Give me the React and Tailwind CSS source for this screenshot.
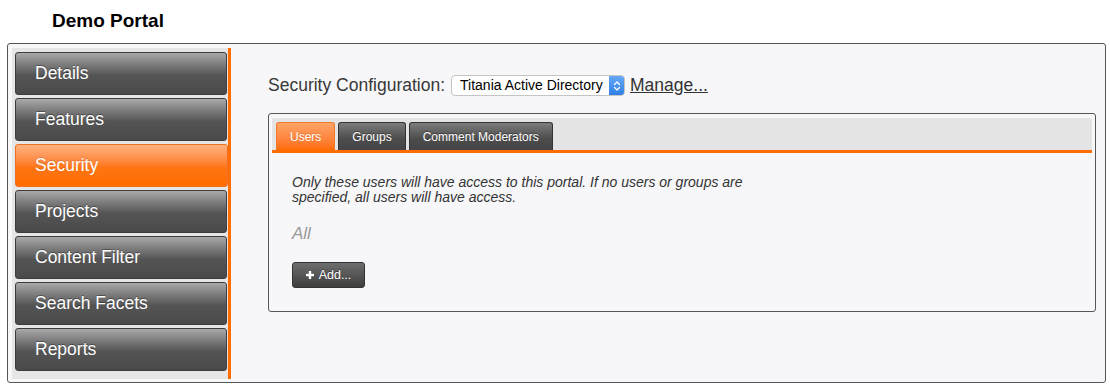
import React, { useState } from 'react';

const sections = ['Details', 'Features', 'Security', 'Projects', 'Content Filter', 'Search Facets', 'Reports'];
const tabs = ['Users', 'Groups', 'Comment Moderators'];

const SideItem = ({ label, active, onClick }) => (
    <div
        onClick={onClick}
        className={
            active
                ? 'h-[43px] mr-[-1px] flex items-center pl-[19px] rounded-[3px] border border-[#f07020] bg-linear-to-b from-[#ffb27e] via-[#ff7512] via-55% to-[#ff6c00] text-white text-[17.5px] cursor-pointer [text-shadow:0_-1px_0_rgba(0,0,0,0.15)]'
                : 'h-[43px] flex items-center pl-[19px] rounded-[3px] border border-[#3c3c3c] bg-linear-to-b from-[#a9a9a9] via-[#545454] via-55% to-[#4a4a4a] text-white text-[17.5px] cursor-pointer [text-shadow:0_-1px_0_rgba(0,0,0,0.35)]'
        }
    >
        {label}
    </div>
);

const Tab = ({ label, active, onClick }) => (
    <div
        onClick={onClick}
        className={
            active
                ? 'h-[28px] flex items-center px-[13px] rounded-t-[3px] border border-b-0 border-[#f07a2a] bg-linear-to-b from-[#ffa467] to-[#ff6c00] text-white text-[12px] cursor-pointer [text-shadow:0_-1px_0_rgba(0,0,0,0.15)]'
                : 'h-[28px] flex items-center px-[13px] rounded-t-[3px] border border-b-0 border-[#333] bg-linear-to-b from-[#7c7c7c] via-[#4c4c4c] via-60% to-[#444] text-white text-[12px] cursor-pointer [text-shadow:0_-1px_0_rgba(0,0,0,0.4)]'
        }
    >
        {label}
    </div>
);

export default function App() {
    const [section, setSection] = useState('Security');
    const [tab, setTab] = useState('Users');

    return (
        <div className="w-[1110px] h-[391px] bg-white font-['Liberation_Sans',Arial,sans-serif] text-[#333]">
            <div className="h-[43px] pt-[10px] pl-[52px]">
                <h1 className="text-[19px] leading-[22px] font-bold text-black">Demo Portal</h1>
            </div>

            <div className="ml-[7px] w-[1099px] h-[340px] border border-[#555] rounded-[3px] bg-[#f7f7f9] flex pl-[4px] pt-[4px] pb-[3px]">
                {/* left nav */}
                <div className="w-[219px] h-[331px] bg-[#e6e6e6] border-r-[3px] border-[#ff6c00] pl-[3px] pr-[1px] pt-[4px] flex flex-col gap-[3px]">
                    {sections.map((s) => (
                        <SideItem key={s} label={s} active={s === section} onClick={() => setSection(s)} />
                    ))}
                </div>

                {/* main content */}
                <div className="flex-1 pl-[37px] pr-[9px] pt-[27px]">
                    <div className="flex items-center h-[21px] text-[17.5px] text-[#383838]">
                        <span>Security Configuration:</span>
                        <div className="ml-[6px] w-[174px] h-[21px] flex items-center justify-between bg-white border border-[#c4c4c4] rounded-[4px] overflow-hidden">
                            <span className="pl-[8px] text-[14px] text-black whitespace-nowrap">Titania Active Directory</span>
                            <span className="w-[15px] h-full flex items-center justify-center bg-linear-to-b from-[#64a9f7] to-[#2f7ee6]">
                                <svg width="8" height="12" viewBox="0 0 8 12" fill="none" stroke="white" strokeWidth="1.3" strokeLinecap="round" strokeLinejoin="round">
                                    <path d="M1.5 4.5 L4 2 L6.5 4.5" />
                                    <path d="M1.5 7.5 L4 10 L6.5 7.5" />
                                </svg>
                            </span>
                        </div>
                        <a href="#" className="ml-[5px] underline text-[#333]">Manage...</a>
                    </div>

                    <div className="mt-[17px] border border-[#555] rounded-[3px] p-[3px] pt-[4px]">
                        <div className="flex items-end gap-[3px] pl-[4px] pt-[4px] bg-[#e4e4e4] rounded-t-[2px] border-b-[3px] border-[#ff6c00]">
                            {tabs.map((t) => (
                                <Tab key={t} label={t} active={t === tab} onClick={() => setTab(t)} />
                            ))}
                        </div>

                        <div className="pl-[20px] pt-[22px] pb-[20px]">
                            <p className="w-[480px] text-[14px] leading-[15px] italic text-[#333]">
                                Only these users will have access to this portal. If no users or groups are specified, all users will have access.
                            </p>
                            <p className="mt-[19px] text-[17px] leading-[20px] italic text-[#999]">All</p>
                            <button className="mt-[18px] w-[73px] h-[26px] flex items-center justify-center gap-[5px] rounded-[3px] border border-[#333] bg-linear-to-b from-[#6e6e6e] to-[#3e3e3e] text-white text-[12.5px] [text-shadow:0_-1px_0_rgba(0,0,0,0.4)]">
                                <svg width="8" height="8" viewBox="0 0 8 8" fill="white">
                                    <rect x="2.8" y="0" width="2.4" height="8" />
                                    <rect x="0" y="2.8" width="8" height="2.4" />
                                </svg>
                                <span>Add...</span>
                            </button>
                        </div>
                    </div>
                </div>
            </div>
        </div>
    );
}
